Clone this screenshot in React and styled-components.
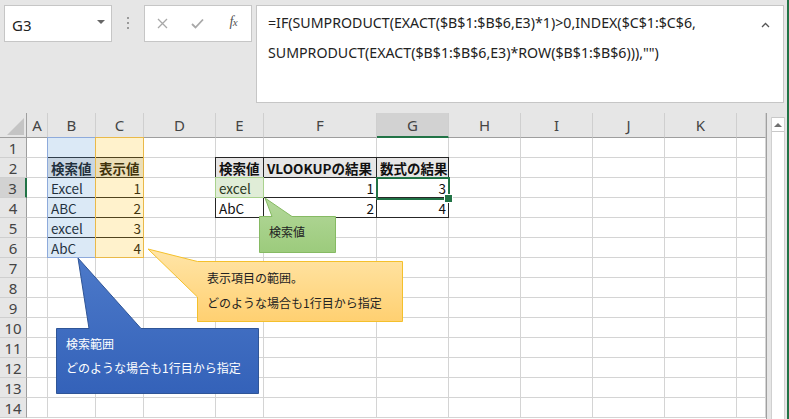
import React from 'react';
import styled, { createGlobalStyle, css } from 'styled-components';

const GlobalStyle = createGlobalStyle`
  html, body { margin: 0; padding: 0; background: #e6e6e6; }
  body { font-family: "Noto Sans", "Noto Sans CJK JP", sans-serif; }
  * { box-sizing: border-box; }
`;

const columns = [
  { key: 'A', w: 21 },
  { key: 'B', w: 48 },
  { key: 'C', w: 48 },
  { key: 'D', w: 72 },
  { key: 'E', w: 48 },
  { key: 'F', w: 113 },
  { key: 'G', w: 72 },
  { key: 'H', w: 72 },
  { key: 'I', w: 72 },
  { key: 'J', w: 72 },
  { key: 'K', w: 72 },
  { key: '', w: 29 },
];

const ROWS = 14;

const cells = {
  B2: { v: '検索値', bold: true, head: true, frame: true },
  C2: { v: '表示値', bold: true, head: true, frame: true },
  B3: { v: 'Excel', frame: true },
  C3: { v: '1', num: true, frame: true },
  B4: { v: 'ABC', frame: true },
  C4: { v: '2', num: true, frame: true },
  B5: { v: 'excel', frame: true },
  C5: { v: '3', num: true, frame: true },
  B6: { v: 'AbC', frame: true },
  C6: { v: '4', num: true, frame: true },
  E2: { v: '検索値', bold: true, head: true, frame: true },
  F2: { v: 'VLOOKUPの結果', bold: true, head: true, frame: true },
  G2: { v: '数式の結果', bold: true, head: true, frame: true },
  E3: { v: 'excel', frame: true },
  F3: { v: '1', num: true, frame: true },
  G3: { v: '3', num: true, frame: true },
  E4: { v: 'AbC', frame: true },
  F4: { v: '2', num: true, frame: true },
  G4: { v: '4', num: true, frame: true },
};

const Page = styled.div`
  width: 789px;
  height: 419px;
  overflow: hidden;
  background: #e6e6e6;
  border-right: 2px solid #217346;
`;

const Toolbar = styled.div`
  height: 113px;
  display: flex;
  align-items: flex-start;
  padding: 5px 0 0 4px;
`;

const NameBox = styled.div`
  width: 108px;
  height: 37px;
  background: #fff;
  border: 1px solid #c6c6c6;
  display: flex;
  align-items: center;
  justify-content: space-between;
  padding: 3px 6px 0 7px;
  font-size: 15px;
  color: #222;
`;

const DropArrow = styled.span`
  width: 0;
  height: 0;
  border-left: 4px solid transparent;
  border-right: 4px solid transparent;
  border-top: 4px solid #666;
  margin-bottom: 6px;
`;

const Grip = styled.div`
  width: 32px;
  display: flex;
  flex-direction: column;
  align-items: center;
  gap: 3px;
  padding-top: 12px;
  span {
    width: 2px;
    height: 2px;
    background: #9a9a9a;
  }
`;

const ButtonBox = styled.div`
  width: 108px;
  height: 37px;
  background: #fff;
  border: 1px solid #c6c6c6;
  display: flex;
  align-items: center;
`;

const Btn = styled.div`
  width: 36px;
  height: 100%;
  display: flex;
  align-items: center;
  justify-content: center;
  color: ${(p) => (p.$dim ? '#a8a8a8' : '#555')};
`;

const Fx = styled.span`
  font-family: "Liberation Serif", serif;
  font-style: italic;
  font-size: 14px;
  color: #555;
  letter-spacing: -0.5px;
  margin-bottom: 3px;
  sub {
    font-size: 11px;
    vertical-align: 0;
  }
`;

const FormulaBar = styled.div`
  margin-left: 4px;
  width: 528px;
  height: 98px;
  background: #fff;
  border: 1px solid #c6c6c6;
  display: flex;
  padding: 2px 0 0 11px;
`;

const FormulaText = styled.div`
  flex: 1;
  font-size: 14.2px;
  line-height: 30px;
  color: #222;
  white-space: nowrap;
`;

const Chevron = styled.div`
  width: 36px;
  display: flex;
  justify-content: center;
  padding-top: 14px;
`;

const Sheet = styled.div`
  position: relative;
  display: flex;
  height: 306px;
`;

const Grid = styled.div`
  display: grid;
  grid-template-columns: 27px ${columns.map((c) => c.w + 'px').join(' ')};
  grid-template-rows: 25px repeat(${ROWS}, 20px);
  width: 767px;
  height: 306px;
  align-content: start;
  background: #fff;
  border-right: 1px solid #a0a0a0;
`;

const Corner = styled.div`
  position: relative;
  background: #e6e6e6;
  border-right: 1px solid #9e9e9e;
  border-bottom: 1px solid #9e9e9e;
  &::after {
    content: '';
    position: absolute;
    right: 2px;
    bottom: 2px;
    width: 0;
    height: 0;
    border-left: 17px solid transparent;
    border-bottom: 17px solid #c4c4c4;
  }
`;

const ColHead = styled.div`
  background: ${(p) => (p.$active ? '#d2d2d2' : '#e6e6e6')};
  border-right: 1px solid #cfcfcf;
  border-bottom: ${(p) => (p.$active ? '2px solid #217346' : '1px solid #9e9e9e')};
  display: flex;
  align-items: center;
  justify-content: center;
  font-size: 15px;
  color: #444;
  padding-top: ${(p) => (p.$active ? '1px' : '0')};
`;

const RowHead = styled.div`
  background: ${(p) => (p.$active ? '#d2d2d2' : '#e6e6e6')};
  border-right: ${(p) => (p.$active ? '2px solid #217346' : '1px solid #9e9e9e')};
  border-bottom: 1px solid #cfcfcf;
  display: flex;
  align-items: center;
  justify-content: center;
  font-size: 15px;
  color: #444;
`;

const Cell = styled.div`
  position: relative;
  background: ${(p) => (p.$head ? '#e7e6e6' : '#fff')};
  border-right: 1px solid #d4d4d4;
  border-bottom: 1px solid #d4d4d4;
  display: flex;
  align-items: center;
  justify-content: ${(p) => (p.$num ? 'flex-end' : 'flex-start')};
  padding: 0 2px 0 3px;
  font-family: "Noto Sans CJK JP", sans-serif;
  font-size: 13.5px;
  font-weight: ${(p) => (p.$bold ? 700 : 400)};
  color: #111;
  white-space: nowrap;
  ${(p) =>
    p.$frame &&
    css`
      &::after {
        content: '';
        position: absolute;
        left: -1px;
        top: -1px;
        right: -1px;
        bottom: -1px;
        border: 1px solid #262626;
        pointer-events: none;
      }
    `}
`;

const Shade = styled.div`
  position: absolute;
  left: ${(p) => p.$x}px;
  top: ${(p) => p.$y}px;
  width: ${(p) => p.$w}px;
  height: ${(p) => p.$h}px;
  background: ${(p) => p.$fill};
  border: 1px solid ${(p) => p.$line};
  pointer-events: none;
`;

const Selection = styled.div`
  position: absolute;
  left: 376px;
  top: 64px;
  width: 74px;
  height: 23px;
  border: 2px solid #217346;
  &::after {
    content: '';
    position: absolute;
    right: -5px;
    bottom: -5px;
    width: 7px;
    height: 7px;
    background: #217346;
    border: 1px solid #fff;
  }
`;

const CalloutBox = styled.div`
  position: absolute;
  z-index: 2;
  left: ${(p) => p.$x}px;
  top: ${(p) => p.$y}px;
  width: ${(p) => p.$w}px;
  height: ${(p) => p.$h}px;
  padding: ${(p) => p.$pad};
  font-family: "Noto Sans CJK JP", sans-serif;
  font-size: 12px;
  line-height: ${(p) => p.$lh}px;
  color: ${(p) => p.$color};
  white-space: nowrap;
`;

const CalloutShape = styled.svg`
  position: absolute;
  left: 0;
  top: 0;
  overflow: visible;
  z-index: -1;
`;

const ScrollPane = styled.div`
  width: 20px;
  background: #e6e6e6;
  padding: 4px 0 0 4px;
`;

const Track = styled.div`
  width: 14px;
  height: 100%;
  background: #fff;
  border-left: 1px solid #d0d0d0;
  border-right: 1px solid #d0d0d0;
`;

const UpButton = styled.div`
  height: 15px;
  border-top: 1px solid #c8c8c8;
  border-bottom: 1px solid #c8c8c8;
  display: flex;
  align-items: center;
  justify-content: center;
  &::before {
    content: '';
    width: 0;
    height: 0;
    border-left: 4px solid transparent;
    border-right: 4px solid transparent;
    border-bottom: 4px solid #707070;
  }
`;

const callouts = [
  {
    id: 'green',
    x: 259, y: 103, w: 77, h: 37,
    d: 'M0.5,0.5 H13 L6,-18 L33,0.5 H76.5 V36.5 H0.5 Z',
    from: '#b4d89b', to: '#9ccb7c', stroke: '#86ba63',
    pad: '7px 0 0 10px', lh: 18, color: '#222',
    lines: ['検索値'],
  },
  {
    id: 'orange',
    x: 197, y: 148, w: 206, h: 61,
    d: 'M0.5,0.5 H205.5 V60.5 H0.5 V36 L-49,-12 Z',
    from: '#ffe5a8', to: '#ffd071', stroke: '#f4c02c',
    pad: '4px 0 0 10px', lh: 25, color: '#222',
    lines: ['表示項目の範囲。', 'どのような場合も1行目から指定'],
  },
  {
    id: 'blue',
    x: 56, y: 215, w: 203, h: 66,
    d: 'M0.5,0.5 H33 L22,-70 L85,0.5 H202.5 V65.5 H0.5 Z',
    from: '#4c79c9', to: '#3462b9', stroke: '#2f5597',
    pad: '4px 0 0 10px', lh: 24, color: '#fff',
    lines: ['検索範囲', 'どのような場合も1行目から指定'],
  },
];

const Callout = ({ c }) => (
  <CalloutBox $x={c.x} $y={c.y} $w={c.w} $h={c.h} $pad={c.pad} $lh={c.lh} $color={c.color}>
    <CalloutShape width={c.w} height={c.h}>
      <defs>
        <linearGradient id={`g-${c.id}`} x1="0" y1="0" x2="0" y2="1">
          <stop offset="0" stopColor={c.from} />
          <stop offset="1" stopColor={c.to} />
        </linearGradient>
      </defs>
      <path d={c.d} fill={`url(#g-${c.id})`} stroke={c.stroke} strokeWidth="1" />
    </CalloutShape>
    {c.lines.map((t) => (
      <div key={t}>{t}</div>
    ))}
  </CalloutBox>
);

const App = () => {
  const rows = [];
  for (let r = 1; r <= ROWS; r++) {
    rows.push(
      <RowHead key={`r${r}`} $active={r === 3}>
        {r}
      </RowHead>
    );
    columns.forEach((col, i) => {
      const c = cells[col.key + r] || {};
      rows.push(
        <Cell key={`${r}-${i}`} $head={c.head} $bold={c.bold} $num={c.num} $frame={c.frame}>
          {c.v}
        </Cell>
      );
    });
  }

  return (
    <>
      <GlobalStyle />
      <Page>
        <Toolbar>
          <NameBox>
            G3
            <DropArrow />
          </NameBox>
          <Grip>
            <span />
            <span />
            <span />
          </Grip>
          <ButtonBox>
            <Btn $dim>
              <svg width="11" height="11" viewBox="0 0 11 11">
                <path d="M1 1 L10 10 M10 1 L1 10" stroke="currentColor" strokeWidth="1.3" fill="none" />
              </svg>
            </Btn>
            <Btn $dim>
              <svg width="13" height="11" viewBox="0 0 13 11">
                <path d="M1 6 L4.5 9.5 L12 1.5" stroke="currentColor" strokeWidth="1.8" fill="none" />
              </svg>
            </Btn>
            <Btn>
              <Fx>
                f<sub>x</sub>
              </Fx>
            </Btn>
          </ButtonBox>
          <FormulaBar>
            <FormulaText>
              <div>=IF(SUMPRODUCT(EXACT($B$1:$B$6,E3)*1)&gt;0,INDEX($C$1:$C$6,</div>
              <div>SUMPRODUCT(EXACT($B$1:$B$6,E3)*ROW($B$1:$B$6))),"")</div>
            </FormulaText>
            <Chevron>
              <svg width="9" height="6" viewBox="0 0 9 6">
                <path d="M1 5 L4.5 1.5 L8 5" stroke="#555" strokeWidth="1.3" fill="none" />
              </svg>
            </Chevron>
          </FormulaBar>
        </Toolbar>

        <Sheet>
          <Grid>
            <Corner />
            {columns.map((col, i) => (
              <ColHead key={i} $active={col.key === 'G'}>
                {col.key}
              </ColHead>
            ))}
            {rows}
          </Grid>
          <ScrollPane>
            <Track>
              <UpButton />
            </Track>
          </ScrollPane>

          <Shade $x={47} $y={24} $w={49} $h={121} $fill="rgba(91,155,213,0.22)" $line="#8eaadb" />
          <Shade $x={95} $y={24} $w={49} $h={121} $fill="rgba(255,192,0,0.2)" $line="#e9b949" />
          <Shade $x={215} $y={64} $w={49} $h={21} $fill="rgba(112,173,71,0.22)" $line="#a9d18e" />
          <Selection />

          {callouts.map((c) => (
            <Callout key={c.id} c={c} />
          ))}
        </Sheet>
      </Page>
    </>
  );
};

export default App;
